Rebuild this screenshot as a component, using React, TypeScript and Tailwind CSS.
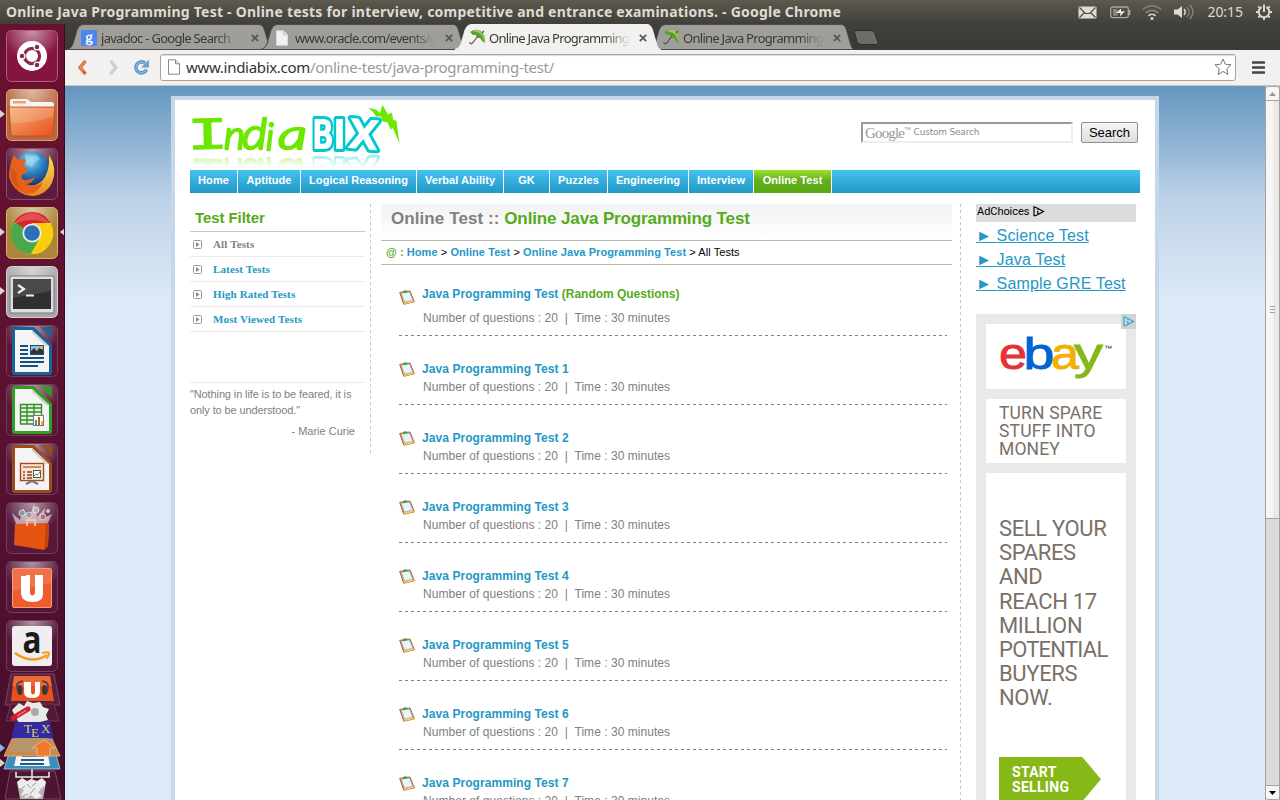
import React from 'react';

const UI = "font-['Noto_Sans','Open_Sans',sans-serif]";
const ARIAL = "font-['Liberation_Sans',Arial,sans-serif]";

/* ---------- Top panel ---------- */

function TitleBar() {
  return (
    <header className={`${UI} flex h-6 shrink-0 items-center justify-between bg-linear-to-b from-[#5d5a4e] to-[#403f3a] pr-2 pl-1.5 text-[#dfdbd2]`}>
      <h1 className="text-[14px] leading-6 font-bold tracking-[0.225px] whitespace-nowrap">
        Online Java Programming Test - Online tests for interview, competitive and entrance examinations. - Google Chrome
      </h1>
      <div className="flex items-center">
        <svg className="mr-[13px]" width="19" height="13" viewBox="0 0 19 13">
          <rect x=".5" y=".5" width="18" height="12" rx="1" fill="#dfdbd2" />
          <path d="M1.500 1.500 7.500 7.500h4l6-6M1.500 11.500l5-5M17.500 11.500l-5-5" fill="none" stroke="#4a4942" strokeWidth="1.200" />
        </svg>
        <svg className="mr-[11px]" width="21" height="13" viewBox="0 0 21 13">
          <rect x=".7" y="1" width="17.600" height="10.600" rx="2" fill="none" stroke="#aaa69c" strokeWidth="1.300" />
          <rect x="18.600" y="4" width="1.800" height="5" fill="#aaa69c" />
          <rect x="3" y="3" width="4.500" height="6.800" fill="#8b887e" />
          <path d="M6 7 11 2.500V5.500l4-.5L10 10.500l.5-3.500z" fill="#f3f0e8" />
        </svg>
        <svg className="mr-[12px]" width="20" height="15" viewBox="0 0 20 15" fill="none">
          <path d="M.8 4.800C6-.4 14-.4 19.200 4.800" stroke="#7f7c72" strokeWidth="1.600" />
          <path d="M3.800 8c3.800-3.600 8.600-3.600 12.400 0" stroke="#8d8a80" strokeWidth="1.600" />
          <path d="M6.500 10.800c2-1.900 5-1.900 7 0" stroke="#dfdbd2" strokeWidth="1.800" />
          <circle cx="10" cy="13.400" r="1.500" fill="#dfdbd2" />
        </svg>
        <svg className="mr-[13px]" width="20" height="16" viewBox="0 0 20 16" fill="none">
          <path d="M0 5.500h3.500L8 2v12l-4.500-3.500H0z" fill="#dfdbd2" />
          <path d="M10 5.200c1.500 1.500 1.500 4 0 5.600" stroke="#dfdbd2" strokeWidth="1.700" />
          <path d="M12.800 3c3 3 3 7 0 10M15.800 1c4 4 4 10 0 14" stroke="#858278" strokeWidth="1.500" />
        </svg>
        <span className="mr-[13px] text-[14px] leading-6 tracking-[-0.05px]">20:15</span>
        <svg width="16" height="16" viewBox="0 0 16 16" fill="none">
          <circle cx="8" cy="8" r="5.300" stroke="#dfdbd2" strokeWidth="1.900" />
          <path d="M8 13v3M0 8h3M13 8h3M2.300 2.300l2 2M13.700 2.300l-2 2M2.300 13.700l2-2M13.700 13.700l-2-2" stroke="#dfdbd2" strokeWidth="1.900" />
          <path d="M8 0v8" stroke="#4f4d45" strokeWidth="4.500" />
          <path d="M8 .5v7.500" stroke="#dfdbd2" strokeWidth="2" />
        </svg>
      </div>
    </header>
  );
}

/* ---------- Launcher ---------- */

function Tile({ base, rim, children }: { base: string; rim: string; children: React.ReactNode }) {
  return (
    <svg className="shrink-0" width="52" height="52" viewBox="0 0 52 52">
      <rect x=".5" y=".5" width="51" height="51" rx="5" fill={base} stroke={rim} />
      <rect x="1" y="1" width="50" height="50" rx="5" fill="url(#tileGloss)" />
      {children}
    </svg>
  );
}

function Doc({ color, children }: { color: string; children: React.ReactNode }) {
  return (
    <Tile base="#5a1636" rim="#74405a">
      <path d="M9 2h19l18 18v27a3 3 0 0 1-3 3H9a3 3 0 0 1-3-3V5a3 3 0 0 1 3-3z" fill={color} />
      <path d="M34 2h9q3 0 3 3v9z" fill={color} opacity=".85" />
      <path d="M9 5h17l17 16v26H9z" fill="#f4f4f4" />
      <path d="M26 5v3l14 13h3z" fill="#cfcfcf" />
      {children}
    </Tile>
  );
}

function Marker({ right = false, top }: { right?: boolean; top: string }) {
  return (
    <svg className={`absolute ${right ? '-right-px' : 'left-0'} ${top}`} width="5" height="8" viewBox="0 0 5 8">
      <path d={right ? 'M5 0v8L0 4z' : 'M0 0v8l5-4z'} fill="#d8d4d4" />
    </svg>
  );
}

function FoldedStack() {
  return (
    <svg className="shrink-0" width="65" height="130" viewBox="0 0 65 130">
      <g stroke="#7a4560" strokeWidth="1">
        <path d="M10 99h45l6 28H5z" fill="#4c1532" />
        <path d="M11 2h43l6 31H5z" fill="#57203c" />
      </g>
      <path d="M17 110h29l-3 17H20z" fill="#b5b5b5" />
      <path d="M16 100v5h33v-5M32 97v10" fill="none" stroke="#eee" strokeWidth="1.500" />
      <path d="M17 110l5-4 5 3 4-2 6 2 5-3 4 4-2 6-6 4 4 4-6 3-5-4-5 3-5-3 3-5-5-2z" fill="#ececec" />
      <path d="M20 118l5-4M30 122l5-6M40 118l4-3M27 112l4 4M23 124l5-2M36 111l-4 3" stroke="#999" />
      <path d="M10 79h45l5 18H4z" fill="#3f8db8" stroke="#8fc0d8" />
      <path d="M18 77h29l3 17H14z" fill="#f5f5f5" />
      <path d="M22 84h22M21 88h23M20 92h24" stroke="#1d5c8a" strokeWidth="2" />
      <path d="M11 32h43l5 17H6z" fill="#501a36" stroke="#6d3a52" />
      <path d="M12 38l7-7 5 3 3-5 6 2 7-1 3 5 6 2-3 6 2 5-8 2-4 5-9-3-6 2-5-8z" fill="#e9e9e9" />
      <circle cx="35" cy="40" r="4" fill="#aaa" />
      <path d="M13 46 28 37" stroke="#cf1f2d" strokeWidth="5" strokeLinecap="round" />
      <path d="M17 44 26 38.500" stroke="#f07d80" strokeWidth="1.200" />
      <path d="M15 50h35l4 19H11z" fill="#3329a3" />
      <text x="24" y="61" fontFamily="Liberation Serif" fontSize="13" fill="#d9d25e">T</text>
      <text x="31" y="65" fontFamily="Liberation Serif" fontSize="13" fill="#d9d25e">E</text>
      <text x="41" y="61" fontFamily="Liberation Serif" fontSize="13" fill="#d9d25e">X</text>
      <path d="M12 67h40l8 17H4z" fill="#c38a53" stroke="#e0aa72" />
      <path d="M15 66h32l3 14H9z" fill="#b9966a" />
      <path d="M44 68l11 8h-5v8H37v-8h-5z" fill="#ee7a2d" stroke="#f9b07a" />
      <path d="M14 4h36l4 25H11z" fill="#e8501f" />
      <path d="M14 4h36l2 10H12z" fill="#f47a4a" opacity=".6" />
      <path d="M24 10h7v10q0 2.500 2 2.500t2-2.500V10h5v10q0 6-8 6t-8-6z" fill="#fff" />
      <path d="M19 22C14 9 20 10 23 9M46 22C51 9 45 10 42 9" fill="none" stroke="#444" strokeWidth="1.800" />
      <ellipse cx="20" cy="18" rx="2.500" ry="5" fill="#3d3533" />
      <ellipse cx="44.500" cy="18" rx="2.500" ry="5" fill="#3d3533" />
      <path d="M0 72v8l5-4z" fill="#7cbbe0" />
      <path d="M0 87v8l5-4z" fill="#d8d4d4" />
    </svg>
  );
}

function Launcher() {
  return (
    <aside className="relative flex w-[65px] shrink-0 flex-col gap-[7px] overflow-hidden border-r border-[#3c0a20] bg-linear-to-b from-[#6a1130] via-[#5a1231] to-[#450e2c] pt-1.5 pl-1.5">
      <svg className="absolute" width="0" height="0">
        <defs>
          <radialGradient id="tileGloss" cx=".5" cy="0" r=".6">
            <stop offset="0" stopColor="#fff" stopOpacity=".55" />
            <stop offset="1" stopColor="#fff" stopOpacity="0" />
          </radialGradient>
          <linearGradient id="orange" x1="0" y1="0" x2="1" y2="1">
            <stop offset="0" stopColor="#f4b079" /><stop offset="1" stopColor="#ea4f1c" />
          </linearGradient>
          <linearGradient id="yellow" x1="0" y1="0" x2="0" y2="1">
            <stop offset="0" stopColor="#fbe05a" /><stop offset="1" stopColor="#e88a1d" />
          </linearGradient>
          <radialGradient id="globe" cx=".45" cy=".25" r=".7">
            <stop offset="0" stopColor="#9adcf5" /><stop offset=".5" stopColor="#2f86c4" /><stop offset="1" stopColor="#123a78" />
          </radialGradient>
        </defs>
      </svg>

      <Tile base="#851440" rim="#b55a80">
        <circle cx="26" cy="26" r="15" fill="#fff" />
        <circle cx="26" cy="26" r="7.600" fill="none" stroke="#8a2c50" strokeWidth="3.200" />
        <g fill="#8a2c50" stroke="#fff" strokeWidth="1.200">
          <circle cx="16" cy="26" r="2.900" /><circle cx="31" cy="17" r="2.900" /><circle cx="31" cy="35" r="2.900" />
        </g>
      </Tile>
      <Tile base="#b9683f" rim="#e0a071">
        <path d="M4 20v-8q0-2 2-2h15l4 3h20q3 0 3 2v5z" fill="#f5f5f5" />
        <rect x="7" y="12" width="13" height="2.500" fill="#f0a070" />
        <path d="M3 18h46l-2 27q0 2-2 2H7q-2 0-2-2z" fill="url(#orange)" stroke="#c4471c" strokeWidth=".8" />
        <path d="M4 19h44l-1 9Q22 35 5 34z" fill="#fff" opacity=".16" />
      </Tile>
      <Tile base="#5e1b3a" rim="#85506a">
        <circle cx="26" cy="21" r="17.500" fill="url(#globe)" />
        <path d="M19 6q6 3 11 1l4 4-5 3-3 5-6-3z" fill="#a5dcf2" opacity=".6" />
        <path d="M43 7q9 14 3 28-6 12-19 13Q10 47 5 32l9 2q16 9 25-5 5-9 4-22z" fill="url(#yellow)" />
        <path d="M8 7q2 2 4 5 5-2 8 0l-3 6 5 3-2 4q-6 1-4 6 5 3 13-2-3 7-9 7 9 4 17-2-5 13-17 12Q6 42 3 29 3 17 8 7z" fill="#e6621c" />
        <path d="M6 19q-4 15 8 22-5-8-3-15l-3-4z" fill="#c9471a" opacity=".6" />
      </Tile>
      <Tile base="#ab853a" rim="#d8b768">
        <circle cx="26" cy="26" r="21" fill="#fbd010" />
        <path d="M26 26 7.800 15.500A21 21 0 0 1 44.500 16H26z" fill="#d9242a" />
        <path d="M26 26 8 15a21 21 0 0 0 17 32l9-16z" fill="#49a84a" />
        <path d="M26 16h18.500A21 21 0 0 1 25 47l9-16z" fill="#fbce0d" />
        <circle cx="26" cy="26" r="9.600" fill="#eee" />
        <circle cx="26" cy="26" r="7.800" fill="#2c70b8" />
        <path d="M7 18Q26-6 45 18 26 8 7 18z" fill="#fff" opacity=".2" />
      </Tile>
      <Tile base="#aaa5a8" rim="#d5d0d2">
        <rect x="4" y="10" width="44" height="37" rx="1" fill="#ddd" stroke="#777" />
        <rect x="7" y="13" width="38" height="30" fill="#303030" />
        <path d="M7 13h38v12L7 32z" fill="#fff" opacity=".12" />
        <path d="M12 19l6 4-6 4M20 29.500h8" fill="none" stroke="#eee" strokeWidth="2.200" />
      </Tile>
      <Doc color="#15649b">
        <path d="M14 21h8M14 25h8M14 29h8M14 33h24M14 37h24M14 41h18" stroke="#174f7e" strokeWidth="2" />
        <rect x="24.500" y="20.500" width="13" height="9" fill="#8dc3e6" stroke="#174f7e" />
        <path d="M25 29v-3l3-3 3 3 3-4 3 3v4z" fill="#333" /><circle cx="35" cy="22.500" r="1.500" fill="#f2b632" />
      </Doc>
      <Doc color="#319e24">
        <rect x="14" y="20" width="22" height="20" fill="#e5f6e0" />
        <path d="M14 20.500h22M14 24h22M14 28h22M14 32h22M14 36h22M14 40h22M14.500 20v20M21 20v20M28 20v20M35.500 20v20" stroke="#338c2a" strokeWidth="1.400" />
        <rect x="27.500" y="31.500" width="10" height="10" fill="#fff" stroke="#777" />
        <path d="M29 41v-5h2v5z" fill="#3d8fd0" /><path d="M32 41v-8h2v8z" fill="#d8521e" /><path d="M35 41v-4h2v4z" fill="#f0b432" />
      </Doc>
      <Doc color="#9c4c1c">
        <rect x="14.500" y="20.500" width="23" height="17" fill="#f7e6dc" stroke="#a34a18" strokeWidth="1.400" />
        <path d="M17 24h18" stroke="#e38454" strokeWidth="2" />
        <path d="M17 29h2M17 32h2M17 35h2M21 29h5M21 32h5M21 35h5" stroke="#8e3e15" strokeWidth="1.700" />
        <rect x="27.500" y="27.500" width="7" height="7" fill="#fff" stroke="#555" />
        <path d="M28 33l2-2 1.500 1 3-4" stroke="#3c9a32" fill="none" />
        <path d="M20 41l6-3 6 3" stroke="#777" strokeWidth="2" fill="none" />
      </Doc>
      <Tile base="#58183a" rim="#74405a">
        <path d="M10 22 6 11l8 7 3-12 6 10 5-14 3 13 8-9-1 10 8-4-5 11z" fill="#ecdfe6" opacity=".65" />
        <g stroke="#fff" strokeWidth=".6">
          <circle cx="16" cy="11" r="3" fill="#7f99b0" /><circle cx="30" cy="8" r="3" fill="#b9b2b2" />
          <circle cx="37" cy="15" r="3" fill="#ad7468" /><circle cx="23" cy="13" r="3" fill="#999" /><circle cx="42" cy="9" r="1.500" fill="#bbb" />
        </g>
        <path d="M9 22l31-1 3 1-1 22-4 4-30-5z" fill="#e65412" />
        <path d="M40 21l3 1-1 22-4 4z" fill="#c4420d" />
        <path d="M21 24v-6h8v6" fill="none" stroke="#f7c6a4" strokeWidth="1.800" />
      </Tile>
      <Tile base="#54163a" rim="#74405a">
        <rect x="6.500" y="7.500" width="39" height="39" rx="1.500" fill="#ef5b2b" stroke="#f89b78" />
        <path d="M7 8h38v14L7 30z" fill="#fff" opacity=".14" />
        <path d="M15 15h5v-1h4v17q0 3.500 2.500 3.500T29 31V14h8v19q0 8-10.500 8T15 33z" fill="#fff" />
      </Tile>
      <Tile base="#511537" rim="#74405a">
        <rect x="6" y="6" width="40" height="40" rx="3" fill="#efefef" />
        <text x="26" y="33" textAnchor="middle" fontFamily="Open Sans" fontSize="37" fontWeight="bold" fill="#1b1b1b" textLength="19" lengthAdjust="spacingAndGlyphs">a</text>
        <path d="M9 33q17 12 32 2" fill="none" stroke="#f59a1b" strokeWidth="2.600" />
        <path d="M36 33q5-1.500 7 0 0 3-2.500 6" fill="none" stroke="#f59a1b" strokeWidth="1.900" />
      </Tile>
      <div className="-mt-[7px] -ml-1.5 flex"><FoldedStack /></div>

      <Marker top="top-[86px]" />
      <Marker top="top-[204px]" />
      <Marker top="top-[263px]" />
      <Marker top="top-[204px]" right />
    </aside>
  );
}

/* ---------- Browser chrome ---------- */

function Umbrella() {
  return (
    <svg width="17" height="17" viewBox="0 0 17 17">
      <path d="M1 3Q7-1 12 2q4 3 4 12l-3-2-2-3-3 0-1-3-3 0z" fill="#5da12d" />
      <path d="M4 2.500q6 0 9 4l3 7q0-9-4-11.500Q8-.5 4 2.500z" fill="#9bcc5c" />
      <path d="M9 7 3.500 14Q1 16 .8 13M13 4l2-2" fill="none" stroke="#555" strokeWidth="1.100" />
    </svg>
  );
}

function PageIcon({ filled = false }: { filled?: boolean }) {
  return (
    <svg width="14" height="16" viewBox="0 0 14 16">
      <path d="M1.500.8h7l4 4v10.400h-11z" fill={filled ? '#f2f2f2' : '#fff'} stroke={filled ? '#dcdcdc' : '#888'} />
      <path d="M8.500.8v4h4" fill="#ddd" stroke={filled ? '#c5c5c5' : '#888'} />
    </svg>
  );
}

function GoogleIcon() {
  return (
    <svg width="16" height="16" viewBox="0 0 16 16">
      <rect width="16" height="16" rx="1" fill="#4a86f0" />
      <text x="8" y="11.500" textAnchor="middle" fontFamily="Liberation Serif" fontSize="15" stroke="#fff" strokeWidth=".4" fill="#fff">g</text>
    </svg>
  );
}

function Tab({ icon, label, active = false }: { icon: React.ReactNode; label: string; active?: boolean }) {
  return (
    <div className={`relative -mr-[14px] flex h-[26px] w-[208px] shrink-0 items-center pt-px pl-4 ${active ? 'z-10' : ''}`}>
      <svg className="absolute inset-0" width="208" height="26" viewBox="0 0 208 26">
        <path
          d="M2 25.500Q6 25 8 20L12 6Q14 .5 18 .5H194Q198 .5 199.500 6l4 14q1 5 4 5.500z"
          fill={active ? '#f2f1f0' : '#9f9e9b'}
          stroke={active ? '#f2f1f0' : '#4b4a46'}
        />
      </svg>
      <span className="relative flex w-5 shrink-0 items-center">{icon}</span>
      <span
        className={`${UI} relative w-[141px] overflow-hidden text-[13px] leading-5 tracking-[-0.72px] whitespace-nowrap text-[#3b3930] [mask-image:linear-gradient(90deg,#000_82%,transparent_100%)]`}
      >
        {label}
      </span>
      <svg className="relative ml-[9px] shrink-0" width="8" height="8" viewBox="0 0 8 8">
        <path d="M.8.8l6.400 6.400M7.200.8.8 7.200" stroke="#555" strokeWidth="1.700" />
      </svg>
    </div>
  );
}

function TabStrip() {
  return (
    <div className="flex h-[26px] shrink-0 items-start bg-linear-to-b from-[#403f3a] to-[#3a3935]">
      <Tab icon={<GoogleIcon />} label="javadoc - Google Search" />
      <Tab icon={<PageIcon filled />} label="www.oracle.com/events/g" />
      <Tab icon={<Umbrella />} label="Online Java Programming" active />
      <Tab icon={<Umbrella />} label="Online Java Programming" />
      <svg className="mt-[6px] ml-[12px]" width="26" height="15" viewBox="0 0 26 15">
        <path d="M1 .5h17q3 0 4 3l3 9q.5 2-2 2H8q-3 0-4-3z" fill="#6c6b67" stroke="#2f2e2b" />
      </svg>
    </div>
  );
}

function Toolbar() {
  return (
    <div className="flex h-9 shrink-0 items-center border-b border-[#c9c6c2] bg-[#f2f1f0] pb-px">
      <svg className="ml-3" width="11" height="17" viewBox="0 0 11 17">
        <path d="M8.500 2 3 8.500l5.500 6.500" fill="none" stroke="#d2622e" strokeWidth="3.400" strokeLinejoin="round" />
        <path d="M8 2.500 3 8.500l3 3.500" fill="none" stroke="#f0925e" strokeWidth="1.300" />
      </svg>
      <svg className="ml-5" width="11" height="17" viewBox="0 0 11 17">
        <path d="M2.500 2 8 8.500 2.500 15" fill="none" stroke="#cfcccb" strokeWidth="3.400" strokeLinejoin="round" />
      </svg>
      <svg className="ml-3.5" width="17" height="17" viewBox="0 0 17 17">
        <path d="M13.500 10.500A5.500 5.500 0 1 1 12 4.200" fill="none" stroke="#5a93c8" strokeWidth="3.600" />
        <path d="M13.300 10.500A5.300 5.300 0 1 1 11.500 4.300" fill="none" stroke="#86b4dd" strokeWidth="1.500" />
        <path d="M16 .5v8H8z" fill="#6ba0d2" />
      </svg>
      <div className="ml-[10px] flex h-[27px] w-[1076px] items-center rounded-[3px] border border-[#a8a39d] bg-white pr-[3px] pl-1.5 shadow-[inset_0_1px_1px_#ddd]">
        <PageIcon />
        <span className={`${UI} ml-[5px] flex-1 text-[15px] leading-6 tracking-[-0.3px] whitespace-nowrap text-[#333]`}>
          www.indiabix.com<span className="text-[#999]">/online-test/java-programming-test/</span>
        </span>
        <svg width="18" height="18" viewBox="0 0 18 18">
          <path d="M9 1l2.300 5.200 5.700.6-4.200 3.900 1.200 5.800-5-3-5 3 1.200-5.800L1 6.800l5.700-.6z" fill="#fff" stroke="#777" strokeLinejoin="round" />
        </svg>
      </div>
      <svg className="ml-4" width="13" height="13" viewBox="0 0 13 13">
        <path d="M1 1.500h11M1 6.500h11M1 11.500h11" stroke="#444" strokeWidth="2.600" strokeLinecap="round" />
      </svg>
    </div>
  );
}

function Scrollbar() {
  return (
    <div className="flex w-[15px] shrink-0 flex-col border-x border-[#a5a3a1] bg-[#dcdad8]">
      <div className="flex h-[15px] items-center justify-center rounded-t-[3px] border-y border-[#a5a3a1] bg-[#f8f6f4]">
        <svg width="7" height="4" viewBox="0 0 7 4"><path d="M0 4 3.500 0 7 4z" fill="#999" /></svg>
      </div>
      <div className="flex h-[418px] flex-col items-center justify-center gap-[2px] border-b border-[#a5a3a1] bg-linear-to-r from-[#f8f6f4] from-50% to-[#ebe9e7] to-60%">
        <i className="h-px w-[5px] bg-[#a3a1a0]" />
        <i className="h-px w-[5px] bg-[#a3a1a0]" />
        <i className="h-px w-[5px] bg-[#a3a1a0]" />
      </div>
      <div className="mt-auto flex h-[15px] items-center justify-center rounded-b-[3px] border-y border-[#a5a3a1] bg-[#f8f6f4]">
        <svg width="7" height="4" viewBox="0 0 7 4"><path d="M0 0h7L3.500 4z" fill="#000" /></svg>
      </div>
    </div>
  );
}

/* ---------- Site ---------- */

function Logo() {
  return (
    <svg
      className="[-webkit-box-reflect:below_0px_linear-gradient(transparent_72%,rgba(255,255,255,0.4))]"
      width="212"
      height="50"
      viewBox="0 0 212 50"
    >
      <g fill="#6de600" stroke="#6de600" strokeLinejoin="round" strokeWidth="2.400">
        <text x="-3.500" y="45" fontFamily="Liberation Mono" fontSize="46" textLength="42" lengthAdjust="spacingAndGlyphs" transform="rotate(-1.500 16 30)" strokeWidth="1">I</text>
        <g fontFamily="Lato" fontWeight="300" fontStyle="italic">
          <text x="34" y="45" fontSize="40" textLength="21" lengthAdjust="spacingAndGlyphs">n</text>
          <text x="52" y="45" fontSize="43" textLength="25" lengthAdjust="spacingAndGlyphs">d</text>
          <text x="76" y="46" fontSize="37">i</text>
          <text x="88" y="45" fontSize="42" textLength="29" lengthAdjust="spacingAndGlyphs">a</text>
        </g>
      </g>
      <g fontFamily="DejaVu Sans" fontWeight="bold" fontSize="41" fill="#fff" stroke="#00c9cd" strokeWidth="6" strokeLinejoin="round" paintOrder="stroke">
        <text x="122" y="45" textLength="22" lengthAdjust="spacingAndGlyphs">B</text>
        <text x="143" y="45" textLength="13" lengthAdjust="spacingAndGlyphs">I</text>
        <text x="158" y="45" textLength="31" lengthAdjust="spacingAndGlyphs" transform="rotate(5 172 32)">X</text>
      </g>
      <path d="M178.500 3.500 187 6l3 3 2.500-8L198 10.500l4-2 1 7.500 3.500.800 1 8.500 2 14.500-6.500-15.500-2.500 1-3-7-4.500-.500-2-5.500-4.500.500-3-4z" fill="#6de600" />
    </svg>
  );
}

const NAV: { label: string; width: string; active?: boolean }[] = [
  { label: 'Home', width: 'w-[47px]' },
  { label: 'Aptitude', width: 'w-[62px]' },
  { label: 'Logical Reasoning', width: 'w-[115px]' },
  { label: 'Verbal Ability', width: 'w-[86px]' },
  { label: 'GK', width: 'w-[45px]' },
  { label: 'Puzzles', width: 'w-[57px]' },
  { label: 'Engineering', width: 'w-[80px]' },
  { label: 'Interview', width: 'w-[64px]' },
  { label: 'Online Test', width: 'w-[77px]', active: true },
];

function Nav() {
  return (
    <nav className="flex h-[23px] gap-px text-[11px] leading-[21px] font-bold tracking-[0.06px] text-white">
      {NAV.map((n) => (
        <a
          key={n.label}
          className={`${n.width} shrink-0 text-center whitespace-nowrap ${
            n.active ? 'bg-linear-to-b from-[#9ee22e] via-[#62b01c] via-45% to-[#5aa914]' : 'bg-linear-to-b from-[#43c3f2] to-[#2297c4]'
          }`}
        >
          {n.label}
        </a>
      ))}
      <div className="flex-1 bg-linear-to-b from-[#43c3f2] to-[#2297c4]" />
    </nav>
  );
}

const FILTERS = ['All Tests', 'Latest Tests', 'High Rated Tests', 'Most Viewed Tests'];

function Sidebar() {
  return (
    <div className="h-[250px] w-[181px] shrink-0 bg-[repeating-linear-gradient(180deg,#c4c4c4_0_3px,transparent_3px_6px)] bg-[length:1px_100%] bg-right bg-no-repeat pr-[6px]">
      <h2 className="h-7 border-b border-[#c8c8c8] pl-[5px] text-[15px] leading-[27px] font-bold tracking-[-0.08px] text-[#56aa1c]">Test Filter</h2>
      <ul>
        {FILTERS.map((f, i) => (
          <li key={f} className="flex h-[25px] items-center border-b border-[#ebebeb] pl-[3px]">
            <svg width="9" height="9" viewBox="0 0 9 9">
              <rect x=".5" y=".5" width="8" height="8" rx="1" fill="#fff" stroke="#999" />
              <path d="M3 2v5l3.500-2.500z" fill="#888" />
            </svg>
            <a className={`ml-[11px] font-['Liberation_Serif',serif] text-[11px] font-bold tracking-[0.14px] ${i === 0 ? 'text-[#808080]' : 'text-[#2398c5]'}`}>{f}</a>
          </li>
        ))}
      </ul>
      <div className="mt-[50px] border-t border-[#ebebeb] pt-[3px] text-[11px] leading-4 tracking-[-0.12px] text-[#808080]">
        <p className="whitespace-nowrap">
          <span className="text-[#d2622e]">"</span>Nothing in life is to be feared, it is
          <br />
          only to be understood.<span className="text-[#d2622e]">"</span>
        </p>
        <p className="mt-[5px] pr-[10px] text-right tracking-normal">- Marie Curie</p>
      </div>
    </div>
  );
}

function Clipboard() {
  return (
    <svg className="shrink-0" width="16" height="15" viewBox="0 0 16 15">
      <path d="M.7 2.400 11 1 15.300 11.800 4.800 14.200z" fill="#f2b04a" stroke="#b45a28" strokeLinejoin="round" />
      <path d="M2.200 3 10.500 2 13.800 10.300 5.500 12z" fill="#eaf3fc" stroke="#87a7cc" strokeWidth=".7" />
      <path d="M3.500 2.700q1-2.600 3-2.400 2 .1 2.500 1.600l-5 1.400z" fill="#2fa836" />
      <path d="M5 13.400 14.600 11.300" stroke="#fbd46a" strokeWidth="1.400" />
    </svg>
  );
}

const META = 'Number of questions : 20 \u00a0|\u00a0 Time : 30 minutes';
const DASH = 'bg-[repeating-linear-gradient(90deg,#808080_0_3px,transparent_3px_6px)] bg-[length:100%_1px] bg-bottom bg-no-repeat';

function TestList() {
  return (
    <ul className="pr-[5px] pl-[18px] text-[12px] leading-[18px] tracking-[0.04px]">
      <li className={`flex h-[71px] pt-5 ${DASH}`}>
        <span className="mt-[5px]"><Clipboard /></span>
        <div className="ml-[7px]">
          <a className="font-bold text-[#2398c5]">
            <span className="tracking-[0.06px]">Java Programming Test </span>
            <span className="tracking-[-0.02px] text-[#56aa1c]">(Random Questions)</span>
          </a>
          <p className="mt-1.5 pl-px text-[#808080]">{META}</p>
        </div>
      </li>
      {[1, 2, 3, 4, 5, 6, 7].map((n) => (
        <li key={n} className={`flex h-[69px] pt-6 ${DASH}`}>
          <span className="mt-[2px]"><Clipboard /></span>
          <div className="ml-[7px]">
            <a className="font-bold tracking-[0.07px] text-[#2398c5]">Java Programming Test {n}</a>
            <p className="pl-px text-[#808080]">{META}</p>
          </div>
        </li>
      ))}
    </ul>
  );
}

function MainColumn() {
  return (
    <main className="ml-[10px] w-[571px] shrink-0">
      <h1 className="h-[37px] border-b border-[#b9b9ae] bg-linear-to-b from-[#f2f2f2] to-white pl-[10px] text-[17px] leading-[29px] font-bold tracking-[0.08px] whitespace-nowrap text-[#808080]">
        Online Test :: <span className="tracking-[-0.13px] text-[#56aa1c]">Online Java Programming Test</span>
      </h1>
      <div className="h-6 border-b border-[#b9b9ae] pl-[5px] text-[11px] leading-[23px] tracking-[0.07px] whitespace-nowrap text-black">
        <b className="text-[#56aa1c]">@ : </b>
        <b className="text-[#2398c5]">Home</b> &gt; <b className="text-[#2398c5]">Online Test</b> &gt;{' '}
        <b className="text-[#2398c5]">Online Java Programming Test</b> &gt; All Tests
      </div>
      <TestList />
    </main>
  );
}

function AdMark({ color }: { color: string }) {
  return (
    <svg width="12" height="11" viewBox="0 0 12 11" fill="none" stroke={color}>
      <path d="M1 10V.8l3 1.200M1 10l3-1 6.500-3.500L4 2" strokeWidth="1.200" />
      <path d="M4.800 5v3M4.800 3.200v1" strokeWidth="1.200" />
    </svg>
  );
}

function Ebay() {
  return (
    <svg width="140" height="65" viewBox="0 0 140 65" fontFamily="Liberation Sans" fontSize="45">
      <g strokeWidth=".9">
        <text x="13" y="45" fill="#e53238" stroke="#e53238" textLength="28" lengthAdjust="spacingAndGlyphs">e</text>
        <text x="37.500" y="45" fill="#0064d2" stroke="#0064d2" textLength="31" lengthAdjust="spacingAndGlyphs">b</text>
        <text x="65" y="45" fill="#f5af02" stroke="#f5af02" textLength="28" lengthAdjust="spacingAndGlyphs">a</text>
        <text x="88" y="45" fill="#86b817" stroke="#86b817" textLength="29" lengthAdjust="spacingAndGlyphs">y</text>
      </g>
      <text x="118" y="27" fontSize="8" fill="#333">™</text>
    </svg>
  );
}

function AdColumn() {
  return (
    <div className="ml-2 w-[180px] shrink-0 bg-[repeating-linear-gradient(180deg,#c4c4c4_0_3px,transparent_3px_6px)] bg-[length:1px_100%] bg-left bg-no-repeat pl-4">
      <div className="flex h-[18px] w-40 items-start bg-[#dcdcdc] pt-[2px] pl-px font-[Roboto,sans-serif] text-[11px] leading-3 text-black">
        <span className="tracking-[-0.05px]">AdChoices</span>
        <span className="ml-1"><AdMark color="#000" /></span>
      </div>
      <div className="flex flex-col items-start pt-[2px] text-[16px] leading-6 tracking-[0.15px] text-[#2398c5]">
        {['Science Test', 'Java Test', 'Sample GRE Test'].map((t) => (
          <a key={t} className="whitespace-nowrap underline">► {t}</a>
        ))}
      </div>
      <div className="relative mt-[18px] flex w-40 flex-col gap-[10px] bg-[#e9e9e7] p-[10px] font-[Roboto,sans-serif] text-[#7b7067]">
        <span className="absolute top-0 right-0 flex h-[15px] w-[15px] items-center justify-center bg-[#d2d2d2]"><AdMark color="#24b0ce" /></span>
        <div className="h-[65px] bg-white"><Ebay /></div>
        <p className="h-16 bg-white pt-[5px] pl-[13px] text-[17.5px] leading-[18px] tracking-[0.15px] whitespace-nowrap">
          TURN SPARE<br />STUFF INTO<br />MONEY
        </p>
        <div className="h-[340px] bg-white pt-11 pl-[13px]">
          <p className="text-[22px] leading-[24.200px] tracking-[-0.35px] whitespace-nowrap">
            SELL YOUR<br />SPARES<br />AND<br />REACH 17<br />MILLION<br /><span className="tracking-[-0.750px]">POTENTIAL</span><br />BUYERS<br />NOW.
          </p>
          <div className="mt-[46px] h-[45px] w-[102px] bg-[#86b817] pt-2 pl-[13px] text-[14px] leading-[15px] font-bold tracking-[0.3px] text-white [clip-path:polygon(0_0,83px_0,100%_50%,83px_100%,0_100%)]">
            START<br />SELLING
          </div>
        </div>
      </div>
    </div>
  );
}

function Site() {
  return (
    <div className="flex min-h-0 flex-1 overflow-hidden">
      <div className={`${ARIAL} min-w-0 flex-1 overflow-hidden bg-[#dce9f6] bg-linear-[180deg,#6496c0_0px,#bbd1e7_112px,#c8daec_145px,#dce9f6_215px] pt-[10px]`}>
        <div className="ml-[106px] h-[900px] w-[988px] border-4 border-[#c5d8ea] bg-white bg-clip-padding px-[15px]">
          <div className="flex h-[70px] items-start justify-between pt-1 pr-[2px]">
            <Logo />
            <div className="mt-[18px] flex items-center gap-2">
              <div className="flex h-[21px] w-[212px] items-center border-2 border-t-[#999] border-r-[#eee] border-b-[#eee] border-l-[#999] pl-[2px] text-[#999]">
                <span className="font-['Liberation_Serif',serif] text-[15px] leading-4 tracking-[-0.85px]">Google</span>
                <span className="self-start text-[7px] leading-[11px] tracking-[-0.5px]">™</span>
                <span className="ml-[3px] pt-px font-['DejaVu_Sans',sans-serif] text-[9px] tracking-[-0.2px] text-[#8c8c8c]">Custom Search</span>
              </div>
              <button className="h-[21px] w-[57px] rounded-[2px] border border-[#8f8f8f] bg-linear-to-b from-[#f5f5f5] to-[#dedede] text-[13px] leading-none text-black">Search</button>
            </div>
          </div>
          <Nav />
          <div className="mt-[11px] flex h-[720px]">
            <Sidebar />
            <MainColumn />
            <AdColumn />
          </div>
        </div>
      </div>
      <Scrollbar />
    </div>
  );
}

export default function App() {
  return (
    <div className="flex h-[800px] w-[1280px] flex-col overflow-hidden bg-[#3c3b37]">
      <TitleBar />
      <div className="flex min-h-0 flex-1">
        <Launcher />
        <div className="flex min-w-0 flex-1 flex-col">
          <TabStrip />
          <Toolbar />
          <Site />
        </div>
      </div>
    </div>
  );
}
